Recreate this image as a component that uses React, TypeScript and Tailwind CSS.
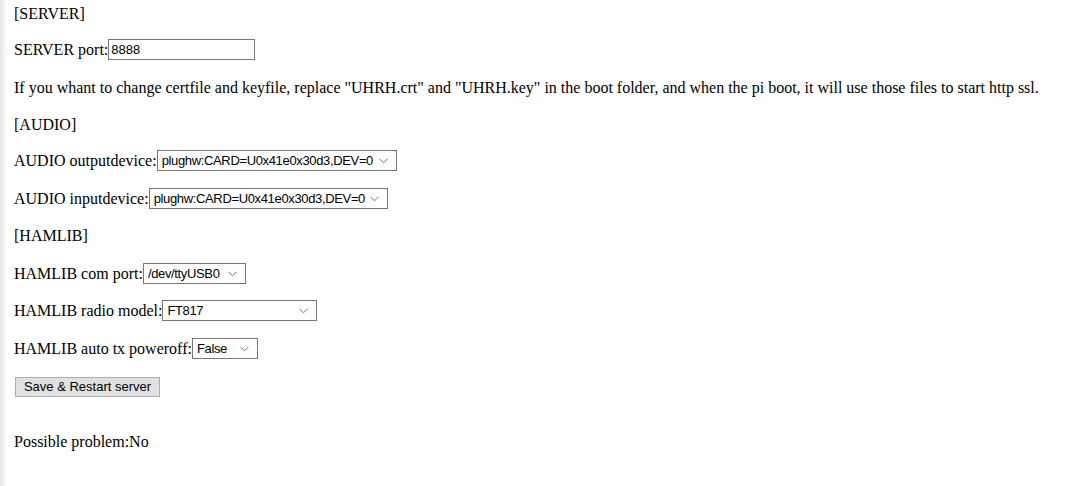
import React from "react"

function Chevron() {
	return (
		<svg width="9" height="6" viewBox="0 0 9 6" className="absolute right-[9px] top-1/2 -translate-y-1/2 pointer-events-none">
			<path d="M0.5 0.8 L4.5 4.8 L8.5 0.8" fill="none" stroke="#707070" strokeWidth="1" />
		</svg>
	)
}

function Select({ value, width }: { value: string; width: string }) {
	return (
		<span className={`relative inline-block h-[21px] ${width}`}>
			<select
				defaultValue={value}
				className="appearance-none w-full h-full border border-[#767676] bg-white pl-[4px] pr-[18px] text-[13px] tracking-[-0.35px] leading-[19px] text-black outline-none font-['Liberation_Sans',Arial,sans-serif] overflow-hidden"
			>
				<option value={value}>{value}</option>
			</select>
			<Chevron />
		</span>
	)
}

function Row({ label, mt, children }: { label: string; mt: string; children: React.ReactNode }) {
	return (
		<div className={`flex items-center h-[21px] ${mt}`}>
			<span>{label}</span>
			{children}
		</div>
	)
}

export default function App() {
	return (
		<div className="flex min-h-[486px] bg-white">
			{/* left edge shade */}
			<div className="w-[7px] shrink-0 bg-gradient-to-r from-[#e4e4e4] via-[#f3f3f3] to-white" />
			<div className="flex flex-col pl-[7px] text-[16px] leading-[18px] text-black font-['Liberation_Serif','Times_New_Roman',serif]">
				<div className="mt-[5px]">[SERVER]</div>

				<Row label="SERVER port:" mt="mt-[16px]">
					<input
						defaultValue="8888"
						className="w-[147px] h-[21px] border border-[#767676] px-[2px] text-[13px] text-black outline-none font-['Liberation_Sans',Arial,sans-serif]"
					/>
				</Row>

				<div className="mt-[19px] whitespace-nowrap">
					If you whant to change certfile and keyfile, replace "UHRH.crt" and "UHRH.key" in the boot folder, and when the pi boot, it will use those files to start http ssl.
				</div>

				<div className="mt-[19px]">[AUDIO]</div>

				<Row label="AUDIO outputdevice:" mt="mt-[16px]">
					<Select value="plughw:CARD=U0x41e0x30d3,DEV=0" width="w-[240px]" />
				</Row>

				<Row label="AUDIO inputdevice:" mt="mt-[17px]">
					<Select value="plughw:CARD=U0x41e0x30d3,DEV=0" width="w-[239px]" />
				</Row>

				<div className="mt-[18px]">[HAMLIB]</div>

				<Row label="HAMLIB com port:" mt="mt-[18px]">
					<Select value="/dev/ttyUSB0" width="w-[103px]" />
				</Row>

				<Row label="HAMLIB radio model:" mt="mt-[16px]">
					<Select value="FT817" width="w-[155px]" />
				</Row>

				<Row label="HAMLIB auto tx poweroff:" mt="mt-[17px]">
					<Select value="False" width="w-[66px]" />
				</Row>

				<div className="mt-[18px]">
					<button className="ml-[1px] w-[145px] h-[20px] bg-[#e1e1e1] border border-[#adadad] text-[13px] leading-[18px] text-black font-['Liberation_Sans',Arial,sans-serif]">
						Save &amp; Restart server
					</button>
				</div>

				<div className="mt-[36px]">Possible problem:No</div>
			</div>
		</div>
	)
}
